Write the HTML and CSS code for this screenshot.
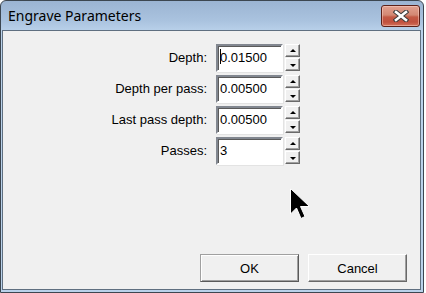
FILE: index.html
```html
<!DOCTYPE html>
<html>
<head>
<meta charset="utf-8">
<link rel="stylesheet" href="styles.css">
</head>
<body>
<div class="window">
  <div class="titlebar">
    <span class="title">Engrave Parameters</span>
    <button class="close" aria-label="Close">
      <svg width="16" height="12" viewBox="0 0 16 12">
        <path d="M3 2 L13 10 M13 2 L3 10" stroke="#3b3b3b" stroke-width="4.6" stroke-linecap="square"/>
        <path d="M3 2 L13 10 M13 2 L3 10" stroke="#ffffff" stroke-width="2.6" stroke-linecap="square"/>
      </svg>
    </button>
  </div>
  <div class="client">
    <div class="form">
      <label class="lbl">Depth:</label>
      <div class="spin">
        <div class="edit"><span class="caret"></span>0.01500</div>
        <div class="arrows"><span class="arr up"></span><span class="arr down"></span></div>
      </div>
      <label class="lbl">Depth per pass:</label>
      <div class="spin">
        <div class="edit">0.00500</div>
        <div class="arrows"><span class="arr up"></span><span class="arr down"></span></div>
      </div>
      <label class="lbl">Last pass depth:</label>
      <div class="spin">
        <div class="edit">0.00500</div>
        <div class="arrows"><span class="arr up"></span><span class="arr down"></span></div>
      </div>
      <label class="lbl">Passes:</label>
      <div class="spin">
        <div class="edit">3</div>
        <div class="arrows"><span class="arr up"></span><span class="arr down"></span></div>
      </div>
    </div>
    <div class="buttons">
      <button class="btn default">OK</button>
      <button class="btn">Cancel</button>
    </div>
    <svg class="cursor" width="22" height="36" viewBox="0 0 22 36">
      <path d="M0.5 0.5 L0.5 26 L6.5 20 L11 30.5 L15 28.5 L10.5 18.5 L19.5 18.5 Z" fill="#000" stroke="#fff" stroke-width="1"/>
    </svg>
  </div>
</div>
</body>
</html>
```
FILE: styles.css
```css
html, body {
  margin: 0;
  padding: 0;
  background: #ffffff;
}
.window {
  position: relative;
  width: 424px;
  height: 293px;
  box-sizing: border-box;
  border: 1px solid #3c4650;
  border-radius: 6px 6px 0 0;
  background: linear-gradient(#9bb4d2 0px, #aac3df 20px, #b9d1ea 30px, #b9d1ea 100%);
  display: flex;
  flex-direction: column;
  padding: 0 2px 2px 1px;
}
.titlebar {
  height: 29px;
  display: flex;
  align-items: flex-start;
  justify-content: space-between;
}
.title {
  font-family: "Noto Sans", "Open Sans", sans-serif;
  font-size: 14px;
  color: #000;
  padding: 7px 0 0 6px;
  line-height: 16px;
}
.close {
  margin: 4px 1px 0 0;
  width: 39px;
  height: 22px;
  border: 1px solid #5c2118;
  border-radius: 3px;
  background: linear-gradient(#e2a190 0%, #d38873 45%, #c35a45 55%, #c0503e 80%, #d4735c 100%);
  box-shadow: inset 0 0 0 1px rgba(255,220,210,0.45);
  display: flex;
  align-items: center;
  justify-content: center;
  padding: 0;
}
.close svg { display: block; }
.client {
  position: relative;
  flex: 1;
  background: #f0f0f0;
  border: 1px solid #5f6f80;
  display: flex;
  flex-direction: column;
  justify-content: space-between;
  font-family: "Liberation Sans", Arial, sans-serif;
  font-size: 13px;
  color: #000;
}
.form {
  display: grid;
  grid-template-columns: 204px auto;
  column-gap: 9px;
  row-gap: 3px;
  padding-top: 13px;
  justify-content: start;
}
.lbl {
  text-align: right;
  padding-top: 6px;
  line-height: 15px;
}
.spin {
  display: flex;
  gap: 2px;
  height: 28px;
}
.edit {
  position: relative;
  width: 67px;
  height: 28px;
  box-sizing: border-box;
  background: #fff;
  border-style: solid;
  border-width: 2px;
  border-color: #828790 #ffffff #ffffff #828790;
  box-shadow: inset 1px 1px 0 #5a5a5a, 1px 1px 0 #e3e3e3;
  padding: 4px 1px 0 2px;
  line-height: 15px;
}
.caret {
  position: absolute;
  left: 2px;
  top: 3px;
  width: 1px;
  height: 15px;
  background: #000;
}
.arrows {
  display: flex;
  flex-direction: column;
  gap: 1px;
}
.arr {
  position: relative;
  width: 15px;
  height: 13px;
  box-sizing: border-box;
  background: #f0f0f0;
  border-style: solid;
  border-width: 1px;
  border-color: #ffffff #696969 #696969 #ffffff;
  box-shadow: inset -1px -1px 0 #a0a0a0;
}
.arr::after {
  content: "";
  position: absolute;
  left: 4px;
  width: 0;
  height: 0;
  border-left: 3px solid transparent;
  border-right: 3px solid transparent;
}
.up::after {
  top: 4px;
  border-bottom: 3px solid #000;
}
.down::after {
  top: 5px;
  border-top: 3px solid #000;
}
.buttons {
  display: flex;
  justify-content: flex-end;
  gap: 9px;
  padding: 0 13px 7px 0;
}
.btn {
  width: 99px;
  height: 28px;
  box-sizing: border-box;
  font-family: "Liberation Sans", Arial, sans-serif;
  font-size: 13px;
  color: #000;
  background: #f0f0f0;
  border-style: solid;
  border-width: 1px;
  border-color: #ffffff #696969 #696969 #ffffff;
  box-shadow: inset -1px -1px 0 #a0a0a0;
  padding: 0;
}
.btn.default {
  border-color: #a0a0a0 #5a5a5a #5a5a5a #a0a0a0;
  box-shadow: inset 1px 1px 0 #ffffff, inset -1px -1px 0 #a0a0a0;
}
.cursor {
  position: absolute;
  left: 287px;
  top: 157px;
}
```
